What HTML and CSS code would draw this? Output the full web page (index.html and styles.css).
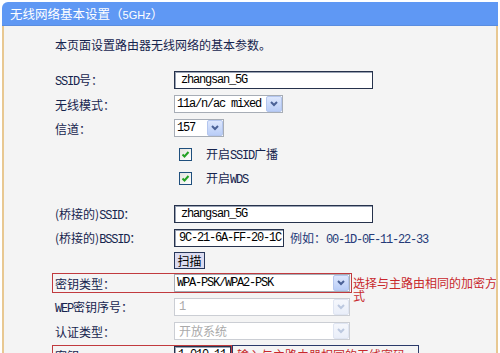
FILE: index.html
```html
<!DOCTYPE html>
<html lang="zh">
<head>
<meta charset="utf-8">
<title>无线网络基本设置</title>
<link rel="stylesheet" href="styles.css">
</head>
<body>
<div class="page">
  <div class="hdr">无线网络基本设置（<span class="hm">5GHz</span>）</div>
  <div class="body">
    <p class="intro">本页面设置路由器无线网络的基本参数。</p>
    <div class="form">
      <div class="row">
        <div class="lbl"><span class="m">SSID</span>号：</div>
        <div class="inp w199"><span class="m">zhangsan_5G</span></div>
      </div>
      <div class="row">
        <div class="lbl">无线模式：</div>
        <div class="sel w109"><span class="v m">11a/n/ac mixed</span><span class="arr"><svg viewBox="0 0 10 8" width="10" height="8"><polyline points="2,2 5,5 8,2" /></svg></span></div>
      </div>
      <div class="row">
        <div class="lbl">信道：</div>
        <div class="sel w50"><span class="v m">157</span><span class="arr"><svg viewBox="0 0 10 8" width="10" height="8"><polyline points="2,2 5,5 8,2" /></svg></span></div>
      </div>
      <div class="row cbrow first">
        <span class="cb"><svg viewBox="0 0 11 11" width="11" height="11"><polyline points="2.5,5.5 4.5,7.5 8.5,3" /></svg></span>
        <span class="cbt">开启<span class="m">SSID</span>广播</span>
      </div>
      <div class="row cbrow">
        <span class="cb"><svg viewBox="0 0 11 11" width="11" height="11"><polyline points="2.5,5.5 4.5,7.5 8.5,3" /></svg></span>
        <span class="cbt">开启<span class="m">WDS</span></span>
      </div>
      <div class="row gap">
        <div class="lbl">(桥接的)<span class="m">SSID</span>：</div>
        <div class="inp w199"><span class="m">zhangsan_5G</span></div>
      </div>
      <div class="row">
        <div class="lbl">(桥接的)<span class="m">BSSID</span>：</div>
        <div class="inp w110"><span class="m">9C-21-6A-FF-20-1C</span></div>
        <span class="eg">例如：<span class="m">00-1D-0F-11-22-33</span></span>
      </div>
      <div class="row short">
        <button class="btn">扫描</button>
      </div>
      <div class="row keyrow">
        <div class="hl w300">
          <div class="lbl in">密钥类型：</div>
          <div class="sel w176"><span class="v m">WPA-PSK/WPA2-PSK</span><span class="arr"><svg viewBox="0 0 10 8" width="10" height="8"><polyline points="2,2 5,5 8,2" /></svg></span></div>
        </div>
        <div class="note">选择与主路由相同的加密方式</div>
      </div>
      <div class="row">
        <div class="lbl"><span class="m">WEP</span>密钥序号：</div>
        <div class="sel w176 dis"><span class="v m">1</span><span class="arr"><svg viewBox="0 0 10 8" width="10" height="8"><polyline points="2,2 5,5 8,2" /></svg></span></div>
      </div>
      <div class="row">
        <div class="lbl">认证类型：</div>
        <div class="sel w176 dis"><span class="v cj">开放系统</span><span class="arr"><svg viewBox="0 0 10 8" width="10" height="8"><polyline points="2,2 5,5 8,2" /></svg></span></div>
      </div>
      <div class="row">
        <div class="hl w180">
          <div class="lbl in">密钥：</div>
          <div class="inp w57"><span class="m">1.010.11</span></div>
        </div>
        <div class="tip">输入与主路由器相同的无线密码</div>
      </div>
    </div>
  </div>
</div>
</body>
</html>
```
FILE: styles.css
```css
* { box-sizing: border-box; }
html, body { margin: 0; padding: 0; overflow: hidden; }
body {
  background: #fff;
  font-family: "Noto Sans CJK SC", sans-serif;
  font-size: 12px;
  color: #16244e;
  width: 500px;
  height: 353px;
}
.page { margin: 2px 2px 0 2px; }
.hdr {
  height: 24px;
  background: #5f98f4;
  border-top-left-radius: 6px;
  border-bottom: 1px solid #5a8de0;
  color: #fff;
  line-height: 23px;
  padding-left: 8px;
  font-size: 12.5px;
}
.hm { font-family: "Liberation Sans", sans-serif; font-size: 11px; }
.body {
  background: #f4f4f4;
  border-left: 2px solid #e8c892;
  border-right: 2px solid #e8c892;
  padding: 10px 0 0 48px;
  height: 327px;
  overflow: hidden;
}
.intro { margin: 0 0 14px 3px; line-height: 18px; }
.m {
  font-family: "Liberation Mono", monospace;
  font-size: 12px;
  letter-spacing: -1.2px;
}
.row { display: flex; align-items: center; height: 24px; }
.lbl { width: 122px; padding-left: 3px; flex: none; white-space: nowrap; }
.lbl.in { width: 121px; padding-left: 2px; }
.inp {
  height: 18px;
  border: 1px solid #26324c;
  box-shadow: inset 1px 1px 0 #9aa3b4;
  background: #fff;
  padding-left: 6px;
  display: flex;
  align-items: center;
  color: #000;
  flex: none;
}
.w199 { width: 199px; }
.w110 { width: 110px; padding-left: 4px; }
.w57 { width: 57px; padding-left: 3px; }
.sel {
  display: flex;
  height: 18px;
  border: 1px solid #a7adb6;
  background: #fff;
  color: #000;
  flex: none;
  padding: 0;
}
.sel .v { flex: 1; padding-left: 2px; line-height: 16px; white-space: nowrap; overflow: hidden; }
.sel .arr {
  width: 16px;
  height: 16px;
  background: linear-gradient(#dde7fd, #b9cdf7);
  border: 1px solid #b4c6ee;
  border-radius: 2px;
  display: flex;
  align-items: center;
  justify-content: center;
}
.arr polyline { fill: none; stroke: #4a6196; stroke-width: 2; }
.w109 { width: 109px; }
.w50 { width: 50px; }
.w176 { width: 176px; }
.sel.dis { border-color: #cbced4; color: #aaa; }
.sel.dis .v { padding-left: 4px; }
.sel.dis .cj { font-size: 12px; }
.sel.dis .arr { background: linear-gradient(#f5f7fc, #e9eef9); border-color: #dfe5f2; }
.sel.dis .arr polyline { stroke: #bcc8df; }
.cbrow { padding-left: 127px; }
.cbrow.first { margin-top: 2px; }
.cb {
  width: 13px;
  height: 13px;
  border: 1px solid #1f4f7d;
  background: linear-gradient(135deg, #e4e4df, #fff);
  display: flex;
  align-items: center;
  justify-content: center;
  margin-right: 14px;
}
.cb polyline { fill: none; stroke: #22a122; stroke-width: 2; }
.gap { margin-top: 12px; }
.eg { margin-left: 6px; color: #253a78; }
.short { height: 20px; padding-left: 122px; align-items: flex-start; }
.btn {
  margin: 2px 0 0 0;
  height: 17px;
  width: 31px;
  padding: 0;
  border: 1px solid #27365a;
  background: #dcdcf0;
  font-family: "Noto Sans CJK SC", sans-serif;
  font-size: 12px;
  line-height: 15px;
  color: #000;
}
.keyrow { margin-top: 1px; }
.hl {
  display: flex;
  align-items: center;
  height: 20px;
  border: 1px solid #c13a3e;
  flex: none;
}
.w300 { width: 300px; }
.w180 { width: 180px; }
.note {
  align-self: flex-start;
  margin-top: 5px;
  margin-left: 1px;
  width: 144px;
  line-height: 13px;
  color: #c8282c;
  flex: none;
}
.tip {
  height: 20px;
  width: 187px;
  border: 1px solid #2a3a6a;
  color: #c8282c;
  padding-left: 4px;
  line-height: 18px;
  white-space: nowrap;
  flex: none;
}
```
